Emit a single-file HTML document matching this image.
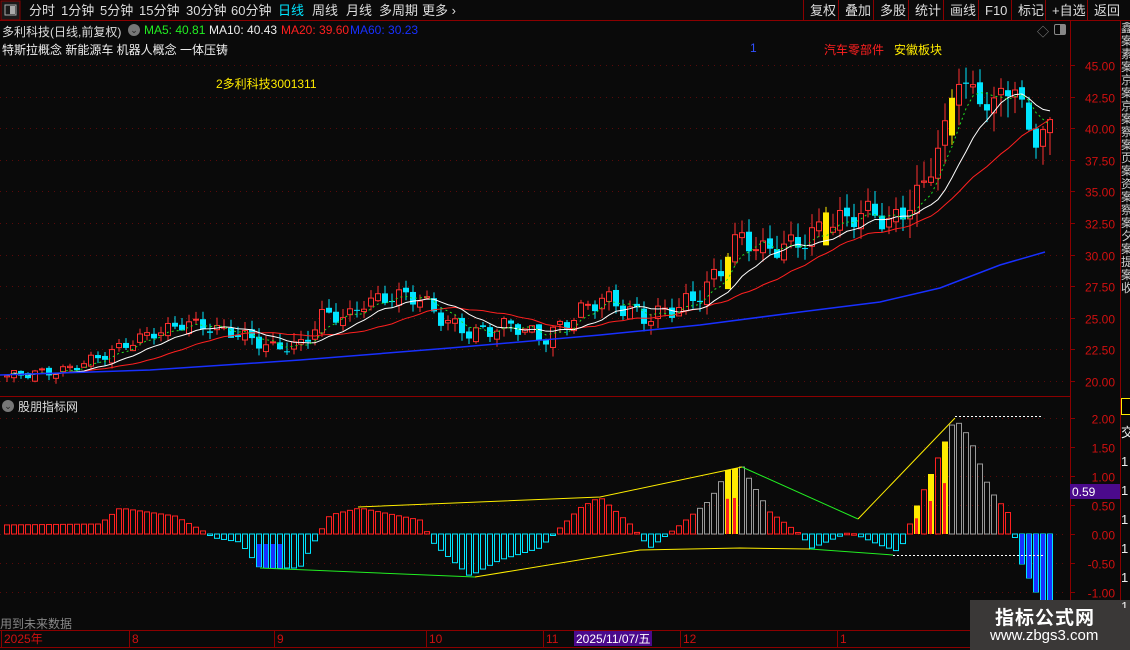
<!DOCTYPE html>
<html><head><meta charset="utf-8"><style>
body{margin:0;background:#0a0a0a;width:1130px;height:650px;overflow:hidden;font-family:"Liberation Sans","Noto Sans CJK SC",sans-serif;position:relative}
.t{position:absolute;white-space:nowrap;font-size:12px}
</style></head><body>
<svg id="s" width="1130" height="650" style="position:absolute;left:0;top:0" xmlns="http://www.w3.org/2000/svg" font-family="Liberation Sans, Noto Sans CJK SC, sans-serif"></svg>
<script>
var s=document.getElementById('s'),o='';
function L(x1,y1,x2,y2,c,w,d){o+='<line x1="'+x1+'" y1="'+y1+'" x2="'+x2+'" y2="'+y2+'" stroke="'+c+'" stroke-width="'+(w||1)+'"'+(d?' stroke-dasharray="'+d+'"':'')+'/>';}
function R(x,y,w,h,f,st){o+='<rect x="'+x+'" y="'+y+'" width="'+w+'" height="'+h+'" fill="'+(f||'none')+'"'+(st?' stroke="'+st+'"':'')+'/>';}
function T(x,y,t,c,sz,a){o+='<text x="'+x+'" y="'+y+'" fill="'+c+'" font-size="'+(sz||12)+'"'+(a?' text-anchor="'+a+'"':'')+'>'+t+'</text>';}
function P(pts,c,w,d){o+='<polyline fill="none" points="'+pts.map(p=>p.join(',')).join(' ')+'" stroke="'+c+'" stroke-width="'+(w||1)+'"'+(d?' stroke-dasharray="'+d+'"':'')+'/>';}
function interp(k,x){for(var i=1;i<k.length;i++)if(x<=k[i][0]){var a=k[i-1],b=k[i];return a[1]+(b[1]-a[1])*(x-a[0])/(b[0]-a[0]);}return k[k.length-1][1];}
L(0,20.5,1130,20.5,'#8b0000');R(1,1,19,19,'#1a1a1a','#8b0000');R(5,5,11,10,'none','#aaa');R(10,6,5,8,'#aaa');
var tabs=[['分时',29],['1分钟',61],['5分钟',100],['15分钟',139],['30分钟',186],['60分钟',231],['日线',278],['周线',312],['月线',346],['多周期',379],['更多 ›',422]];
tabs.forEach(t=>T(t[1],15,t[0],t[0]=='日线'?'#00e5ff':'#ddd',13));
var rb=[['复权',808],['叠加',843],['多股',878],['统计',913],['画线',948],['F10',983],['标记',1016],['+自选',1050],['返回',1092]];
rb.forEach((t,i)=>{T(t[1]+2,15,t[0],'#ddd',13);L(t[1]-4.5,0,t[1]-4.5,20,'#8b0000');});
L(0,396.5,1070,396.5,'#8b0000');L(1070.5,20,1070.5,630,'#8b0000');L(1120.5,20,1120.5,650,'#8b0000');
L(0,630.5,1130,630.5,'#8b0000');L(0,647.5,1130,647.5,'#8b0000');
function py(p){return 381-(p-20)*12.64;}
for(var p=20;p<=45;p+=2.5){var y=Math.round(py(p))+.5;L(0,y,1068,y,'#5a0a0a',1,'1 5');L(1070,y,1075,y,'#8b0000');T(1115,y+5,p.toFixed(2),'#d01010',12,'end');}
function iy(v){return 534-v*58;}
[2,1.5,1,.5,0,-.5,-1].forEach(v=>{var y=Math.round(iy(v))+.5;L(0,y,1068,y,'#5a0a0a',1,'1 5');L(1070,y,1075,y,'#8b0000');T(1115,y+5,v.toFixed(2),'#d01010',12,'end');});
var kp=[[0,20.4],[60,20.8],[100,22],[140,23.5],[185,24.6],[240,23.6],[270,22.6],[300,22.9],[320,25.3],[345,25],[360,26.2],[400,26.8],[420,26.4],[440,24.8],[470,23.7],[510,24.5],[540,23.3],[560,24.4],[575,25.4],[600,26.6],[640,25],[660,25.4],[690,26.4],[720,28.9],[735,31.5],[760,30.3],[800,31],[820,32.3],[850,33],[870,33.5],[885,32.3],[905,33.8],[920,35.3],[935,38.5],[945,40.2],[955,44.5],[965,42.8],[980,42.4],[990,41.5],[1000,43],[1010,43.8],[1022,40.5],[1030,39.3],[1045,39.8]];
var closes=[],xs=[];
for(var i=0;i<150;i++){var x=4+i*7;if(x>1047)break;xs.push(x);var c=interp(kp,x)+Math.sin(i*1.7)*0.35*(1+x/600);closes.push(c);}
var yel=[728,952,820];
closes.forEach((c,i)=>{var x=xs[i],op=i?closes[i-1]+Math.cos(i*2.3)*0.25:c-.1;var up=c>=op;var k=x>900?1.8:1;var hi=Math.max(c,op)+Math.abs(Math.sin(i*3.1))*0.5*(1+x/700)*k,lo=Math.min(c,op)-Math.abs(Math.cos(i*2.7))*0.4*(1+x/700)*k;
var y1=py(Math.max(c,op)),y2=py(Math.min(c,op));if(y2-y1<1)y2=y1+1;
var col=up?'#ff3030':'#00e5ff';var isY=yel.some(v=>Math.abs(v-x)<4);
L(x+3,py(hi),x+3,py(lo),isY?'#ffeb00':col);
if(isY){R(x,y1-8,6,y2-y1+20,'#ffeb00');}else if(up)R(x+.5,y1,5,y2-y1,'#0a0a0a',col);else R(x,y1,6,y2-y1,col);});
function ma(n){return closes.map((c,i)=>{var a=closes.slice(Math.max(0,i-n+1),i+1);return [xs[i]+3,py(a.reduce((p,q)=>p+q,0)/a.length)];});}
P(ma(20),'#ff2020',1);P(ma(10),'#ffffff',1);P(ma(5),'#22dd22',1,'2 3');
P([[0,375],[150,370],[300,360],[450,348],[600,335],[700,325],[800,312],[880,302],[940,288],[1000,265],[1045,252]],'#1830ff',1.5);
var ik=[[0,525],[100,524],[120,508],[175,516],[205,532],[215,538],[240,542],[260,568],[300,568],[312,546],[330,515],[360,508],[420,520],[435,545],[470,576],[500,560],[540,548],[558,530],[580,508],[600,497],[630,524],[650,548],[680,525],[710,500],[728,470],[742,467],[770,512],[800,534],[812,548],[850,532],[880,545],[900,552],[915,510],[935,465],[955,418],[970,438],[990,490],[1010,515],[1020,560],[1040,600]];
xs.forEach((x,i)=>{var y=interp(ik,x+3);var pos=y<534;var col=pos?'#ff2020':'#00e5ff';
if((x>695&&x<765)||(x>940&&x<995))col='#999';
var y1=Math.min(y,534),h=Math.abs(534-y);if(h<1.5)h=1.5;
var fy=(Math.abs(x-728)<5)||(x>912&&x<950&&i%2==0);
if(fy){R(x,y1,6,h,'#ffeb00');R(x+1,y1+h*0.45,3,h*0.55,'#ff2020');}
else{R(x+.5,y1,5,h,'none',col);if(!pos&&((x>250&&x<280)||x>1018))R(x+1,y1+(x>1018?0:10),4,h-(x>1018?0:10),'#1830ff');}});
P([[358,507],[600,497],[742,467]],'#ffee00');P([[742,467],[858,519]],'#22ee22');P([[858,519],[955,418]],'#ffee00');L(955,416.5,1043,416.5,'#fff',1,'2 2');
P([[260,568],[475,577]],'#22ee22');P([[475,577],[640,550],[740,548],[810,549]],'#ffee00');P([[810,549],[893,555]],'#22ee22');L(893,555.5,1043,555.5,'#fff',1,'2 2');
R(1070,484,50,15,'#4b0a8c');T(1072,496,'0.59','#fff',12);
[['2025年',4],['8',132],['9',277],['10',429],['11',546],['12',683],['1',840]].forEach(t=>{L(t[1]-2.5,630,t[1]-2.5,647,'#8b0000');T(t[1],643,t[0],'#d01010',12);});
R(574,631,78,15,'#4b0a8c');T(576,643,'2025/11/07/五','#fff',12);
s.innerHTML=o;
</script>
<div class="t" style="left:2px;top:23px;color:#ddd">多利科技(日线,前复权)</div>
<div style="position:absolute;left:128px;top:24px;width:12px;height:12px;border-radius:50%;background:#777;color:#222;font-size:9px;text-align:center;line-height:12px">⌄</div>
<div class="t" style="left:144px;top:23px;color:#22ee22">MA5: 40.81</div>
<div class="t" style="left:209px;top:23px;color:#eee">MA10: 40.43</div>
<div class="t" style="left:281px;top:23px;color:#ff2020">MA20: 39.60</div>
<div class="t" style="left:350px;top:23px;color:#1830ff">MA60: 30.23</div>
<div class="t" style="left:2px;top:41px;color:#eee">特斯拉概念 新能源车 机器人概念 一体压铸</div>
<div class="t" style="left:750px;top:41px;color:#3050ff">1</div>
<div class="t" style="left:824px;top:41px;color:#ff2020">汽车零部件</div>
<div class="t" style="left:894px;top:41px;color:#ffeb00">安徽板块</div>
<div class="t" style="left:1037px;top:23px;color:#888">◇</div>
<div style="position:absolute;left:1054px;top:24px;width:10px;height:9px;border:1px solid #888;border-radius:2px"><div style="margin-left:5px;width:5px;height:9px;background:#888"></div></div>
<div class="t" style="left:216px;top:75px;color:#ffeb00">2多利科技3001311</div>
<div style="position:absolute;left:2px;top:400px;width:12px;height:12px;border-radius:50%;background:#777;color:#222;font-size:9px;text-align:center;line-height:12px">⌄</div>
<div class="t" style="left:18px;top:398px;color:#ddd">股朋指标网</div>
<div class="t" style="left:0;top:615px;color:#888">用到未来数据</div>
<div style="position:absolute;left:970px;top:600px;width:160px;height:50px;background:#3a3837"></div>
<div class="t" style="left:995px;top:603px;color:#fff;font-size:19px;font-weight:bold;letter-spacing:1px">指标公式网</div>
<div class="t" style="left:990px;top:627px;color:#fff;font-size:15px">www.zbgs3.com</div>
<div style="position:absolute;left:1121px;top:22px;width:9px;height:370px;color:#ccc;font-size:12px;line-height:13px;overflow:hidden">鑫案素案京案京案察案页案资案察案夕案提案收</div>
<div style="position:absolute;left:1121px;top:398px;width:9px;height:15px;background:#000;border:1px solid #ffeb00"></div>
<div style="position:absolute;left:1121px;top:418px;width:9px;height:190px;color:#eee;font-size:13px;line-height:29px;overflow:hidden">交<br>1<br>1<br>1<br>1<br>1<br>1</div>
</body></html>
